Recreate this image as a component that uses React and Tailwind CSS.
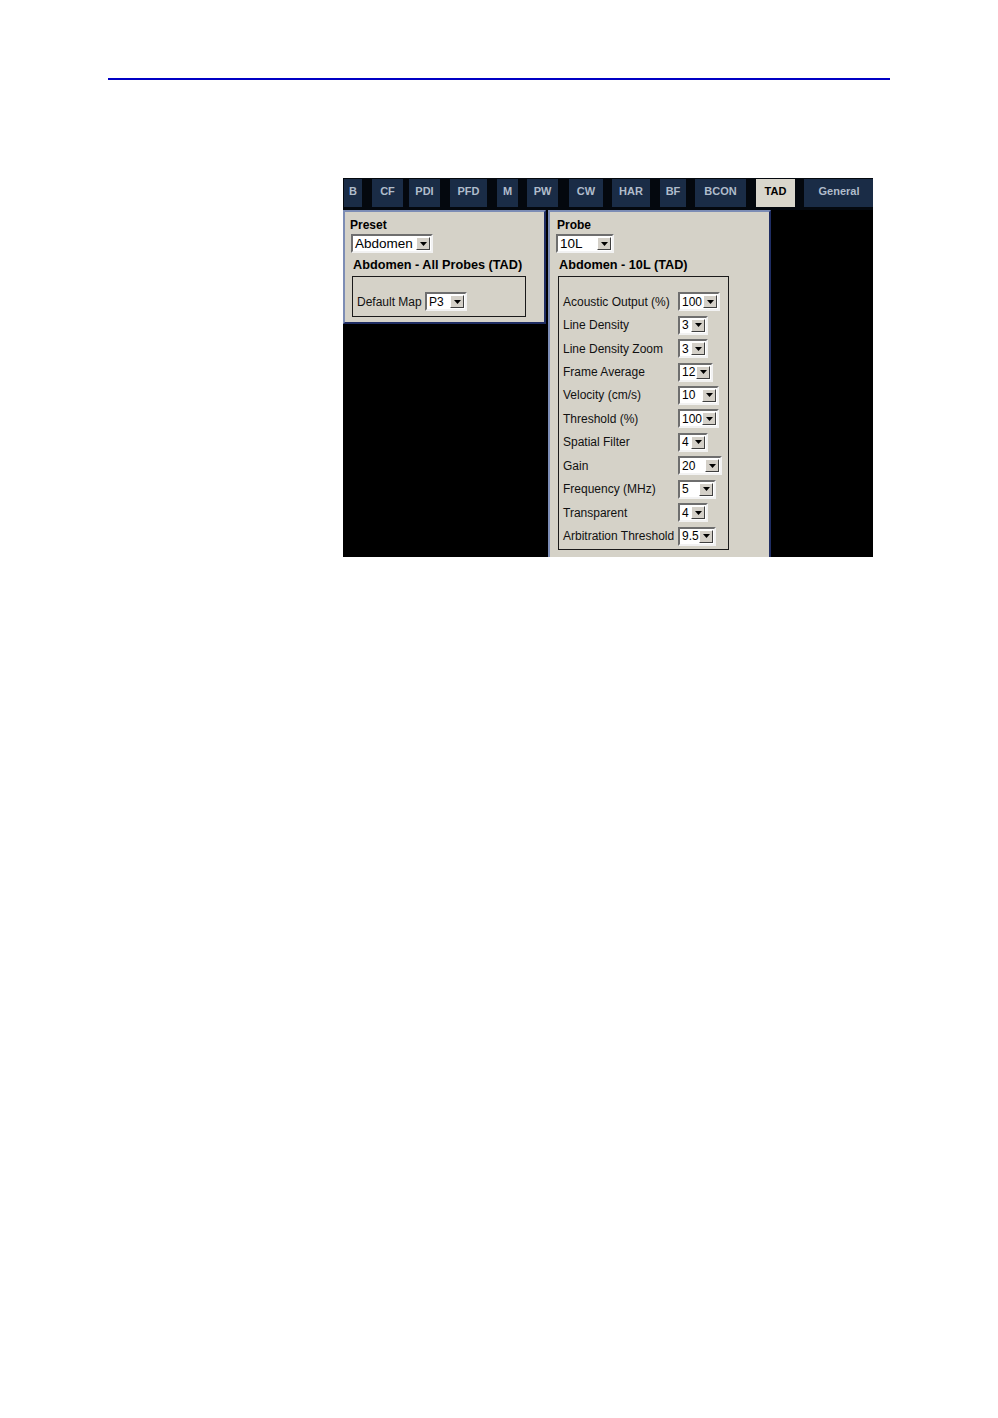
import React from 'react';

const FONT = { fontFamily: '"Liberation Sans", Arial, sans-serif' };

const tabs = [
  { label: 'B', cls: 'ml-[1px] w-[18px]' },
  { label: 'CF', cls: 'ml-[10px] w-[31px]' },
  { label: 'PDI', cls: 'ml-[6px] w-[31px]' },
  { label: 'PFD', cls: 'ml-[10px] w-[37px]' },
  { label: 'M', cls: 'ml-[10px] w-[21px]' },
  { label: 'PW', cls: 'ml-[9px] w-[31px]' },
  { label: 'CW', cls: 'ml-[11px] w-[34px]' },
  { label: 'HAR', cls: 'ml-[9px] w-[38px]' },
  { label: 'BF', cls: 'ml-[10px] w-[26px]' },
  { label: 'BCON', cls: 'ml-[9px] w-[51px]' },
  { label: 'TAD', cls: 'ml-[10px] w-[39px]', active: true },
  { label: 'General', cls: 'ml-[9px] w-[70px]' },
];

const rows = [
  { label: 'Acoustic Output (%)', value: '100', w: 'w-[42px]' },
  { label: 'Line Density', value: '3', w: 'w-[30px]' },
  { label: 'Line Density Zoom', value: '3', w: 'w-[30px]' },
  { label: 'Frame Average', value: '12', w: 'w-[35px]' },
  { label: 'Velocity (cm/s)', value: '10', w: 'w-[41px]' },
  { label: 'Threshold (%)', value: '100', w: 'w-[41px]' },
  { label: 'Spatial Filter', value: '4', w: 'w-[30px]' },
  { label: 'Gain', value: '20', w: 'w-[44px]' },
  { label: 'Frequency (MHz)', value: '5', w: 'w-[38px]' },
  { label: 'Transparent', value: '4', w: 'w-[30px]' },
  { label: 'Arbitration Threshold', value: '9.5', w: 'w-[38px]' },
];

// classic sunken combo box with a raised arrow button
const Combo = ({ value, w, big }) => (
  <div
    className={`${w} h-[19px] flex items-stretch bg-white border-2 border-t-[#6e6e6e] border-l-[#6e6e6e] border-r-[#f2f2f2] border-b-[#f2f2f2]`}
  >
    <span
      className={`flex-1 flex items-center pl-[2px] text-black ${big ? 'text-[13.5px]' : 'text-[12px]'} leading-none overflow-hidden`}
    >
      {value}
    </span>
    <span className="w-[14px] my-[1px] mr-[1px] bg-[#d4d0c8] border border-t-white border-l-white border-r-[#404040] border-b-[#404040] flex items-center justify-center">
      <svg width="7" height="4" viewBox="0 0 7 4">
        <path d="M0 0h7L3.5 4z" fill="#000" />
      </svg>
    </span>
  </div>
);

const panelBorder =
  'border-2 border-t-[#7d8db5] border-l-[#7d8db5] border-r-[#1f2d63] border-b-[#1f2d63] bg-[#d5d2c8]';

export default function App() {
  return (
    <div className="w-[998px] min-h-[1418px] bg-white" style={FONT}>
      <div className="pt-[78px] pl-[108px]">
        <div className="w-[782px] h-[2px] bg-[#0000c4]" />
      </div>

      <div className="ml-[343px] mt-[98px] w-[530px] h-[379px] bg-black overflow-hidden flex flex-col">
        {/* mode tabs */}
        <div className="h-[32px] shrink-0 bg-[#04080e] flex items-start pt-[1px]">
          {tabs.map((t) => (
            <div
              key={t.label}
              className={`${t.cls} h-[28px] pb-[3px] shrink-0 flex items-center justify-center text-[11px] font-bold ${
                t.active ? 'bg-[#d9d6cc] text-black' : 'bg-[#1a2c46] text-[#b0bccb]'
              }`}
            >
              {t.label}
            </div>
          ))}
        </div>

        <div className="flex-1 flex items-start gap-[2px]">
          {/* preset panel */}
          <div className={`w-[203px] h-[114px] shrink-0 ${panelBorder}`}>
            <div className="mt-[6px] ml-[5px] text-[12px] leading-[14px] font-bold text-black">Preset</div>
            <div className="mt-[2px] ml-[6px]">
              <Combo value="Abdomen" w="w-[82px]" big />
            </div>
            <div className="mt-[4px] ml-[8px] text-[12.7px] leading-[16px] font-bold text-black whitespace-nowrap">
              Abdomen - All Probes (TAD)
            </div>
            <div className="mt-[3px] ml-[7px] w-[174px] h-[41px] border border-[#1a1a1a] flex items-start pt-[15px] pl-[4px]">
              <span className="w-[68px] h-[19px] flex items-center text-[12px] text-[#111]">Default Map</span>
              <Combo value="P3" w="w-[42px]" />
            </div>
          </div>

          {/* probe panel */}
          <div className={`w-[223px] self-stretch h-[400px] shrink-0 ${panelBorder}`}>
            <div className="mt-[6px] ml-[7px] text-[12px] leading-[14px] font-bold text-black">Probe</div>
            <div className="mt-[2px] ml-[6px]">
              <Combo value="10L" w="w-[58px]" big />
            </div>
            <div className="mt-[4px] ml-[9px] text-[12.7px] leading-[16px] font-bold text-black whitespace-nowrap">
              Abdomen - 10L (TAD)
            </div>
            <div className="mt-[3px] ml-[8px] w-[171px] h-[274px] border border-[#1a1a1a] pt-[13px] pl-[4px]">
              {rows.map((r) => (
                <div key={r.label} className="h-[23.45px] flex items-center">
                  <span className="w-[115px] shrink-0 text-[12px] text-[#111] whitespace-nowrap">{r.label}</span>
                  <Combo value={r.value} w={r.w} />
                </div>
              ))}
            </div>
          </div>
        </div>
      </div>
    </div>
  );
}
